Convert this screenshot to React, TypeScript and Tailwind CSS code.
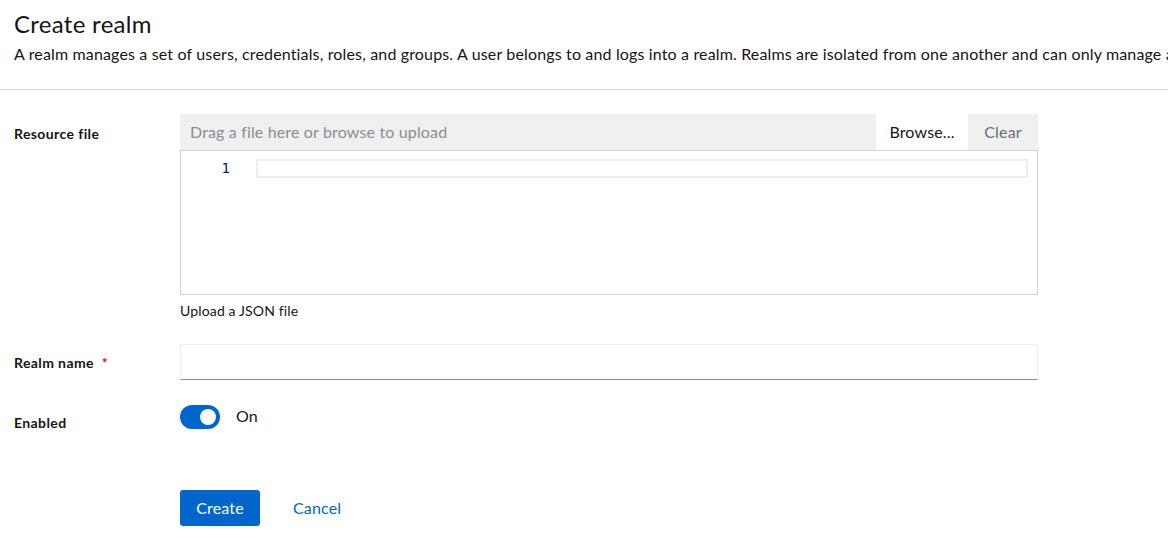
import React from "react";

export default function App() {
  return (
    <div className="w-[1168px] h-[540px] overflow-hidden bg-white text-[#151515] font-['Lato',sans-serif] tracking-[0.15px]">
      <div className="px-[14px] pt-[8px] pb-[23px] border-b border-[#d2d2d2]">
        <h1 className="text-[24px] leading-[32px] whitespace-nowrap tracking-[0.3px]">Create realm</h1>
        <p className="text-[16px] leading-[24px] mt-[2px] whitespace-nowrap">
          A realm manages a set of users, credentials, roles, and groups. A user belongs to and logs into a realm. Realms are isolated from one another and can only manage and authenticate the users that they control.
        </p>
      </div>

      <div className="pl-[14px] pt-[24px] flex flex-col">
        {/* Resource file */}
        <div className="flex">
          <div className="w-[166px] pt-[10px] text-[14px] font-bold leading-[20px] tracking-[0.4px]">Resource file</div>
          <div className="w-[858px] flex flex-col">
            <div className="flex h-[36px] bg-[#f0f0f0]">
              <div className="flex-1 flex items-center pl-[10px] text-[16px] text-[#8a8d90]">
                Drag a file here or browse to upload
              </div>
              <div className="w-[92px] bg-white flex items-center justify-center text-[16px] text-[#151515]">Browse...</div>
              <div className="w-[70px] flex items-center justify-center text-[16px] text-[#6a6e73]">Clear</div>
            </div>
            <div className="h-[145px] border border-[#d2d2d2] bg-[#fffffe] flex pt-[8px]">
              <div className="w-[75px] flex justify-end pr-[26px]">
                <span className="text-[14px] leading-[19px] text-[#0b216f] font-['DejaVu_Sans_Mono',monospace] tracking-normal">1</span>
              </div>
              <div className="flex-1 pr-[9px]">
                <div className="h-[19px] border-2 border-[#eeeeee]" />
              </div>
            </div>
            <div className="text-[14px] leading-[20px] mt-[6px]">Upload a JSON file</div>
          </div>
        </div>

        {/* Realm name */}
        <div className="flex mt-[23px]">
          <div className="w-[166px] pt-[9px] text-[14px] font-bold leading-[20px] tracking-[0.4px]">
            Realm name <span className="text-[#c9190b] ml-[4px]">*</span>
          </div>
          <div className="w-[858px] h-[36px] border border-[#f0f0f0] border-b-[#8a8d90]" />
        </div>

        {/* Enabled */}
        <div className="flex mt-[25px]">
          <div className="w-[166px] pt-[8px] text-[14px] font-bold leading-[20px] tracking-[0.4px]">Enabled</div>
          <div className="flex items-start">
            <div className="w-[40px] h-[24px] rounded-full bg-[#0066cc] relative">
              <div className="absolute right-[4px] top-[4px] w-[16px] h-[16px] rounded-full bg-white" />
            </div>
            <span className="ml-[16px] text-[16px] leading-[24px] -mt-[1px]">On</span>
          </div>
        </div>

        {/* Actions */}
        <div className="flex mt-[57px]">
          <div className="w-[166px]" />
          <button className="w-[80px] h-[36px] rounded-[3px] bg-[#0066cc] text-white text-[16px]">Create</button>
          <button className="ml-[17px] px-[16px] h-[36px] text-[#0066cc] text-[16px]">Cancel</button>
        </div>
      </div>
    </div>
  );
}
